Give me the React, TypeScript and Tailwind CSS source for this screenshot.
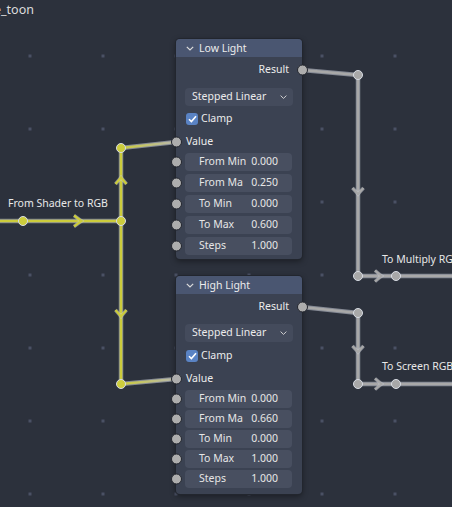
import React from "react";

const FONT = "font-['Noto_Sans',_'DejaVu_Sans',_sans-serif]";

function Socket({ side }: { side: "left" | "right" }) {
  return (
    <span
      className={
        side === "left"
          ? "absolute left-[-5.5px] top-1/2 -translate-y-1/2 w-[11px] h-[11px] rounded-full bg-[#adadad] border border-[#23262e]"
          : "absolute right-[-5.5px] top-1/2 -translate-y-1/2 w-[11px] h-[11px] rounded-full bg-[#adadad] border border-[#23262e]"
      }
    />
  );
}

type Field = [string, string];

function Node({
  title,
  left,
  top,
  fields,
  gap,
  ddGap,
  clampGap,
  pb,
}: {
  title: string;
  left: number;
  top: number;
  fields: Field[];
  gap: string;
  ddGap: string;
  clampGap: string;
  pb: string;
}) {
  return (
    <div
      className="absolute w-[126px] rounded-[4px] bg-[#3b4252] shadow-[0_0_0_1px_#22262e,0_2px_6px_rgba(0,0,0,0.45)]"
      style={{ left, top }}
    >
      <div className="flex h-[18px] items-center gap-[5px] rounded-t-[4px] bg-[#4a5671] pl-[10px] text-[10.5px] text-[#ececec]">
        <svg width="8" height="5" viewBox="0 0 8 5">
          <path d="M0.8 0.8 L4 4 L7.2 0.8" fill="none" stroke="#dcdcdc" strokeWidth="1.2" />
        </svg>
        <span className="leading-none">{title}</span>
      </div>
      <div className={`flex flex-col ${pb}`}>
        <div className="relative mt-[3px] flex h-[20px] items-center justify-end pr-[13px] text-[10.5px] text-[#ececec]">
          <span>Result</span>
          <Socket side="right" />
        </div>
        <div className={`${ddGap} mx-[9px] flex h-[18px] items-center justify-between rounded-[4px] bg-[#444b5c] pl-[7px] pr-[6px] text-[10.5px] text-[#ececec]`}>
          <span>Stepped Linear</span>
          <svg width="7" height="4" viewBox="0 0 7 4">
            <path d="M0.6 0.6 L3.5 3.4 L6.4 0.6" fill="none" stroke="#d0d0d0" strokeWidth="1" />
          </svg>
        </div>
        <div className={`${clampGap} flex h-[20px] items-center gap-[3px] pl-[10px] text-[10.5px] text-[#ececec]`}>
          <span className="flex h-[12px] w-[12px] items-center justify-center rounded-[3px] bg-[#5a83c4]">
            <svg width="9" height="8" viewBox="0 0 9 8">
              <path d="M1 4.2 L3.4 6.6 L8 1.2" fill="none" stroke="#ffffff" strokeWidth="1.6" />
            </svg>
          </span>
          <span>Clamp</span>
        </div>
        <div className="relative mt-[3px] flex h-[20px] items-center pl-[10px] text-[10.5px] text-[#ececec]">
          <span>Value</span>
          <Socket side="left" />
        </div>
        <div className={`mt-[1px] flex flex-col ${gap}`}>
          {fields.map(([label, value]) => (
            <div key={label} className="relative flex h-[18px] pl-[9px] pr-[10px]">
              <div className="flex flex-1 items-center justify-between rounded-[4px] bg-[#484f60] px-[14px] text-[10.5px] text-[#e6e6e6]">
                <span>{label}</span>
                <span>{value}</span>
              </div>
              <Socket side="left" />
            </div>
          ))}
        </div>
      </div>
    </div>
  );
}

function Wire({ d, color, grad }: { d: string; color: string; grad?: boolean }) {
  return (
    <g fill="none" strokeLinejoin="round" strokeLinecap="round">
      <path d={d} stroke="rgba(205,210,220,0.55)" strokeWidth="4.5" />
      <path d={d} stroke={grad ? "url(#yg)" : color} strokeWidth="2.6" />
    </g>
  );
}

function Chevron({ d, color }: { d: string; color: string }) {
  return (
    <g fill="none" strokeLinejoin="miter" strokeLinecap="butt">
      <path d={d} stroke="rgba(205,210,220,0.5)" strokeWidth="3.6" />
      <path d={d} stroke={color} strokeWidth="2.2" />
    </g>
  );
}

function Dot({ x, y, color }: { x: number; y: number; color: string }) {
  return <circle cx={x} cy={y} r="4.5" fill={color} stroke="#d8dce4" strokeWidth="1" />;
}

export default function App() {
  const Y = "#cccc3c";
  const G = "#a8a8a8";
  const gx = [30, 103, 176, 249, 322, 395];
  const gy = [56, 129, 202, 275, 348, 421, 494];
  return (
    <div className={`relative h-[507px] w-[452px] overflow-hidden bg-[#2c313c] ${FONT}`}>
      <svg className="absolute left-0 top-0" width="452" height="507">
        <defs>
          <linearGradient id="yg" x1="121" y1="0" x2="176" y2="0" gradientUnits="userSpaceOnUse">
            <stop offset="0" stopColor={Y} />
            <stop offset="1" stopColor="#b8b8b0" />
          </linearGradient>
        </defs>
        {gx.map((x) => gy.map((y) => <rect key={`${x}-${y}`} x={x - 1.5} y={y - 1.5} width="3" height="3" fill="#4a5164" />))}
        <Wire d="M-5 221 L121 221" color={Y} />
        <Wire d="M121 148 L121 384" color={Y} />
        <Wire d="M121 148 L176 142" color={Y} grad />
        <Wire d="M121 384 L176 379" color={Y} grad />
        <Chevron d="M74 215.5 L81.5 221 L74 226.5" color={Y} />
        <Chevron d="M115.5 184 L121 177.5 L126.5 184" color={Y} />
        <Chevron d="M115.5 310 L121 316.5 L126.5 310" color={Y} />
        <Dot x={23} y={221} color={Y} />
        <Dot x={121} y={221} color={Y} />
        <Dot x={121} y={148} color={Y} />
        <Dot x={121} y={384} color={Y} />
        <Wire d="M302 70 L358 75 L358 276 L460 276" color={G} />
        <Wire d="M302 307 L358 313 L358 384 L460 384" color={G} />
        <Chevron d="M352.5 188 L358 194 L363.5 188" color={G} />
        <Chevron d="M375 270.5 L381.5 276 L375 281.5" color={G} />
        <Chevron d="M352.5 346 L358 352 L363.5 346" color={G} />
        <Chevron d="M375 378.5 L381.5 384 L375 389.5" color={G} />
        <Dot x={358} y={75} color={G} />
        <Dot x={358} y={276} color={G} />
        <Dot x={396} y={276} color={G} />
        <Dot x={358} y={313} color={G} />
        <Dot x={358} y={384} color={G} />
        <Dot x={396} y={384} color={G} />
      </svg>

      <div className="absolute left-[-6px] top-[1px] whitespace-nowrap text-[12.5px] text-[#dcdcdc]">e_toon</div>
      <div className="absolute left-[8px] top-[196px] whitespace-nowrap text-[10.5px] text-[#e8e8e8]">From Shader to RGB</div>
      <div className="absolute left-[382px] top-[252px] whitespace-nowrap text-[10.5px] text-[#e8e8e8]">To Multiply RGB</div>
      <div className="absolute left-[382px] top-[359px] whitespace-nowrap text-[10.5px] text-[#e8e8e8]">To Screen RGB</div>

      <Node
        title="Low Light"
        left={176}
        top={39}
        gap="gap-[3px]"
        ddGap="mt-[8px]"
        clampGap="mt-[3px]"
        pb="pb-[4px]"
        fields={[
          ["From Min", "0.000"],
          ["From Ma", "0.250"],
          ["To Min", "0.000"],
          ["To Max", "0.600"],
          ["Steps", "1.000"],
        ]}
      />
      <Node
        title="High Light"
        left={176}
        top={276}
        gap="gap-[2px]"
        ddGap="mt-[7px]"
        clampGap="mt-[4px]"
        pb="pb-[6px]"
        fields={[
          ["From Min", "0.000"],
          ["From Ma", "0.660"],
          ["To Min", "0.000"],
          ["To Max", "1.000"],
          ["Steps", "1.000"],
        ]}
      />
    </div>
  );
}
